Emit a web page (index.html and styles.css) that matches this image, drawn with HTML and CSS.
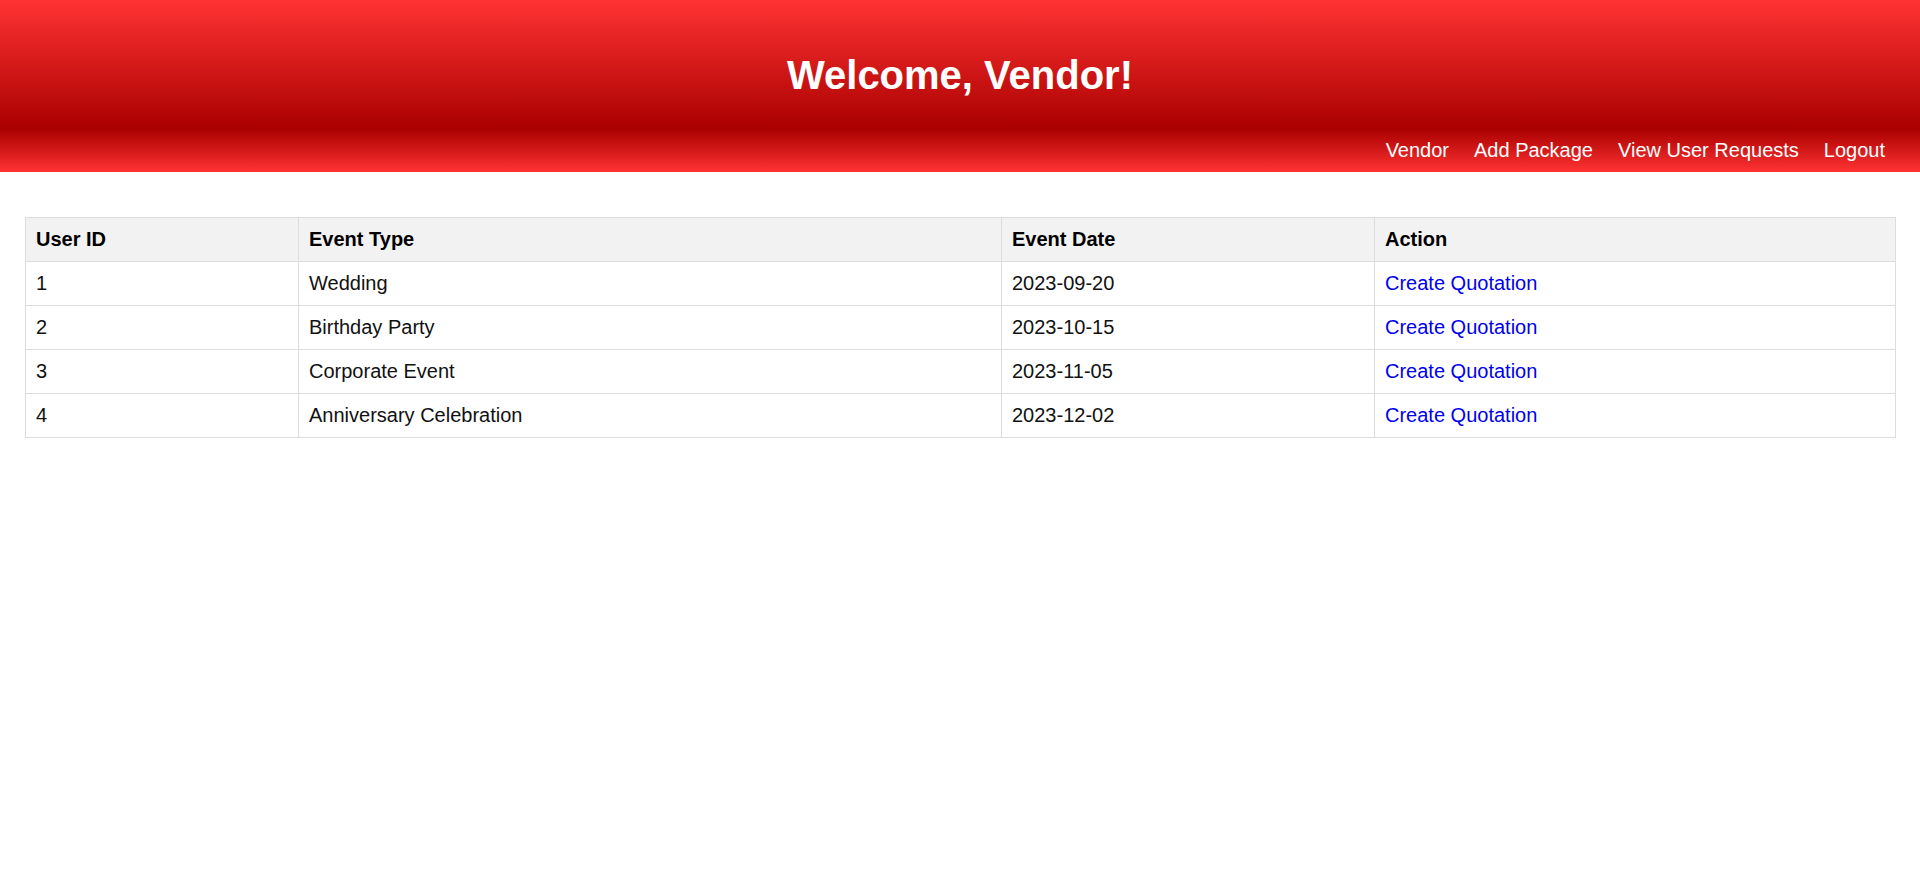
FILE: index.html
```html
<!DOCTYPE html>
<html lang="en">
<head>
<meta charset="utf-8">
<title>Vendor Dashboard</title>
<link rel="stylesheet" href="styles.css">
</head>
<body>
<header class="site-header">
  <h1 class="title">Welcome, Vendor!</h1>
  <nav class="nav">
    <a href="#" class="nav-link">Vendor</a>
    <a href="#" class="nav-link">Add Package</a>
    <a href="#" class="nav-link">View User Requests</a>
    <a href="#" class="nav-link">Logout</a>
  </nav>
</header>
<main class="content">
  <table class="requests">
    <colgroup>
      <col class="c1"><col class="c2"><col class="c3"><col class="c4">
    </colgroup>
    <thead>
      <tr><th>User ID</th><th>Event Type</th><th>Event Date</th><th>Action</th></tr>
    </thead>
    <tbody>
      <tr><td>1</td><td>Wedding</td><td>2023-09-20</td><td><a href="#" class="action">Create Quotation</a></td></tr>
      <tr><td>2</td><td>Birthday Party</td><td>2023-10-15</td><td><a href="#" class="action">Create Quotation</a></td></tr>
      <tr><td>3</td><td>Corporate Event</td><td>2023-11-05</td><td><a href="#" class="action">Create Quotation</a></td></tr>
      <tr><td>4</td><td>Anniversary Celebration</td><td>2023-12-02</td><td><a href="#" class="action">Create Quotation</a></td></tr>
    </tbody>
  </table>
</main>
</body>
</html>
```
FILE: styles.css
```css
html, body {
  margin: 0;
  padding: 0;
  background: #ffffff;
  font-family: "Liberation Sans", Arial, sans-serif;
}

.site-header {
  background: linear-gradient(to bottom, #ff3333 0%, #aa0000 75%, #ff3333 100%);
  color: #ffffff;
  padding: 52px 35px 10px;
  height: 172px;
  box-sizing: border-box;
}

.title {
  margin: 0 0 41px;
  font-size: 40px;
  line-height: 46px;
  font-weight: bold;
  text-align: center;
}

.nav {
  display: flex;
  justify-content: flex-end;
  gap: 25px;
  font-size: 20px;
  line-height: 23px;
}

.nav-link {
  color: #ffffff;
  text-decoration: none;
}

.content {
  padding: 45px 25px;
}

.requests {
  width: 100%;
  border-collapse: collapse;
  table-layout: fixed;
  font-size: 20px;
  line-height: 23px;
}

.c1 { width: 273px; }
.c2 { width: 703px; }
.c3 { width: 373px; }
.c4 { width: 521px; }

.requests th,
.requests td {
  border: 1px solid #dddddd;
  padding: 10px;
  text-align: left;
  color: #111111;
}

.requests th {
  background: #f2f2f2;
  font-weight: bold;
  color: #000000;
}

.action {
  color: #0000ee;
  text-decoration: none;
}
```
